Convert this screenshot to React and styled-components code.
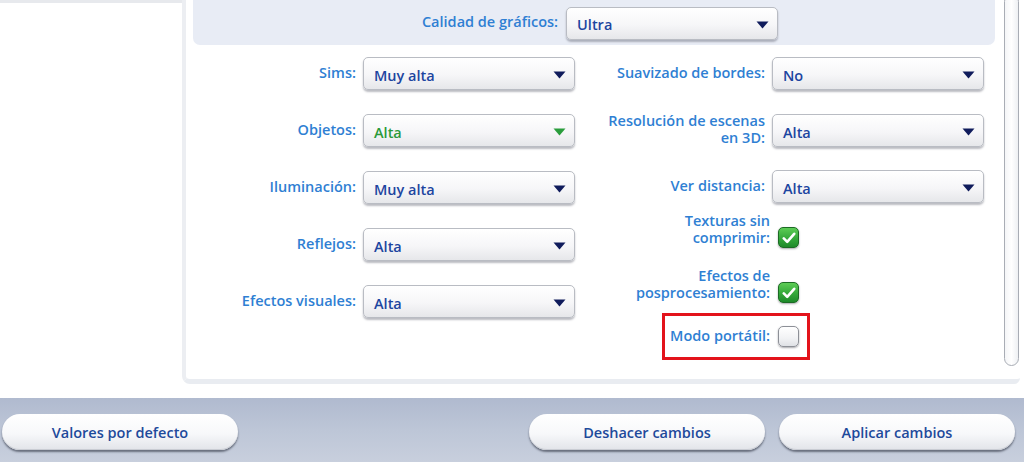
import styled, { createGlobalStyle } from 'styled-components'

const GlobalStyle = createGlobalStyle`
  html, body {
    margin: 0;
    padding: 0;
    background: #ffffff;
    font-family: "Open Sans", "DejaVu Sans", sans-serif;
    overflow: hidden;
  }
`

const leftRows = [
  { label: 'Sims:', value: 'Muy alta' },
  { label: 'Objetos:', value: 'Alta', green: true },
  { label: 'Iluminación:', value: 'Muy alta' },
  { label: 'Reflejos:', value: 'Alta' },
  { label: 'Efectos visuales:', value: 'Alta' },
]

function Arrow({ green }) {
  return (
    <svg width="13" height="8" viewBox="0 0 13 8">
      <path d="M0.5 0.5 H12.5 L6.5 7.5 Z" fill={green ? '#2a9d3c' : '#101c5c'} />
    </svg>
  )
}

function Check() {
  return (
    <svg width="14" height="12" viewBox="0 0 14 12">
      <path
        d="M1.8 6.4 L5.2 9.8 L12.2 1.8"
        fill="none"
        stroke="#ffffff"
        strokeWidth="2.6"
        strokeLinecap="round"
        strokeLinejoin="round"
      />
    </svg>
  )
}

function Dropdown({ value, green }) {
  return (
    <Select>
      <SelectValue $green={green}>{value}</SelectValue>
      <Arrow green={green} />
    </Select>
  )
}

export default function App() {
  return (
    <>
      <GlobalStyle />
      <Screen>
        <Upper>
          <Sidebar />
          <Panel>
            <Content>
              <QualityBar>
                <Label>Calidad de gráficos:</Label>
                <Dropdown value="Ultra" />
              </QualityBar>
              <Columns>
                <Column>
                  {leftRows.map((row, i) => (
                    <Row key={row.label} $top={i === 0 ? 12 : 24}>
                      <Label $width={163}>{row.label}</Label>
                      <Dropdown value={row.value} green={row.green} />
                    </Row>
                  ))}
                </Column>
                <Column>
                  <Row $top={12}>
                    <Label $width={183}>Suavizado de bordes:</Label>
                    <Dropdown value="No" />
                  </Row>
                  <Row $top={22}>
                    <Label $width={183}>
                      Resolución de escenas
                      <br />
                      en 3D:
                    </Label>
                    <Dropdown value="Alta" />
                  </Row>
                  <Row $top={21}>
                    <Label $width={183}>Ver distancia:</Label>
                    <Dropdown value="Alta" />
                  </Row>
                  <Row $top={9} $bottom>
                    <Label $width={188}>
                      Texturas sin
                      <br />
                      comprimir:
                    </Label>
                    <Box $checked>
                      <Check />
                    </Box>
                  </Row>
                  <Row $top={18} $bottom>
                    <Label $width={188}>
                      Efectos de
                      <br />
                      posprocesamiento:
                    </Label>
                    <Box $checked>
                      <Check />
                    </Box>
                  </Row>
                  <Row $top={22}>
                    <Label $width={188}>Modo portátil:</Label>
                    <Box />
                    <Highlight />
                  </Row>
                </Column>
              </Columns>
            </Content>
            <Scrollbar />
          </Panel>
        </Upper>
        <Footer>
          <PillButton>Valores por defecto</PillButton>
          <ButtonGroup>
            <PillButton>Deshacer cambios</PillButton>
            <PillButton>Aplicar cambios</PillButton>
          </ButtonGroup>
        </Footer>
      </Screen>
    </>
  )
}

const Screen = styled.div`
  width: 1024px;
  height: 462px;
  display: flex;
  flex-direction: column;
  background: #ffffff;
`

const Upper = styled.div`
  display: flex;
  height: 398px;
  flex-shrink: 0;
`

const Sidebar = styled.div`
  width: 182px;
  height: 382px;
  border-top: 3px solid #e7e9ed;
  box-sizing: border-box;
  background: #ffffff;
`

const Panel = styled.div`
  width: 838px;
  height: 384px;
  display: flex;
  box-sizing: border-box;
  border-left: 4px solid #eceef2;
  border-bottom: 5px solid #e9ecf1;
  border-bottom-left-radius: 8px;
  border-bottom-right-radius: 6px;
  background: #ffffff;
`

const Content = styled.div`
  width: 802px;
  margin-left: 7px;
  display: flex;
  flex-direction: column;
`

const QualityBar = styled.div`
  height: 45px;
  display: flex;
  align-items: center;
  justify-content: center;
  gap: 8px;
  padding-left: 12px;
  padding-top: 1px;
  box-sizing: border-box;
  background: #e8ecf5;
  border-bottom-left-radius: 7px;
  border-bottom-right-radius: 7px;
`

const Columns = styled.div`
  display: flex;
  gap: 7px;
`

const Column = styled.div`
  display: flex;
  flex-direction: column;
`

const Row = styled.div`
  position: relative;
  display: flex;
  align-items: ${({ $bottom }) => ($bottom ? 'flex-end' : 'center')};
  gap: 7px;
  margin-top: ${({ $top }) => $top}px;
`

const Label = styled.div`
  width: ${({ $width }) => ($width ? `${$width}px` : 'auto')};
  flex-shrink: 0;
  text-align: right;
  font-size: 14.5px;
  font-weight: 600;
  line-height: 17px;
  color: #2f7fd3;
  padding-bottom: 3px;
`

const Select = styled.div`
  width: 212px;
  height: 33px;
  box-sizing: border-box;
  display: flex;
  align-items: center;
  justify-content: space-between;
  padding: 3px 8px 0 10px;
  border: 1px solid #b9bcc3;
  border-radius: 5px;
  background: linear-gradient(#ffffff 0%, #f6f6f8 55%, #e6e7ea 100%);
  box-shadow: 0 2px 2px rgba(60, 64, 80, 0.35);
`

const SelectValue = styled.span`
  font-size: 14.5px;
  font-weight: 600;
  color: ${({ $green }) => ($green ? '#2a9a3a' : '#1d45a0')};
`

const Box = styled.div`
  width: 21px;
  height: 21px;
  box-sizing: border-box;
  margin-left: 1px;
  margin-bottom: 1px;
  display: flex;
  align-items: center;
  justify-content: center;
  border-radius: 5px;
  border: 1px solid ${({ $checked }) => ($checked ? '#1c6b24' : '#8d9097')};
  background: ${({ $checked }) =>
    $checked
      ? 'linear-gradient(#5ccc55 0%, #34a83a 55%, #1e8a2a 100%)'
      : 'linear-gradient(#ffffff 0%, #f1f2f4 60%, #dfe1e5 100%)'};
  box-shadow: 0 1px 2px rgba(40, 40, 50, 0.4);
`

const Highlight = styled.div`
  position: absolute;
  left: 80px;
  top: -13px;
  width: 148px;
  height: 47px;
  box-sizing: border-box;
  border: 3px solid #e3131b;
  pointer-events: none;
`

const Scrollbar = styled.div`
  width: 15px;
  height: 372px;
  margin-left: 9px;
  margin-top: -6px;
  box-sizing: border-box;
  border: 1.5px solid #a9adb5;
  border-radius: 8px;
  background: linear-gradient(90deg, #f4f5f7, #ffffff 50%, #eef0f3);
`

const Footer = styled.div`
  flex: 1;
  display: flex;
  align-items: center;
  justify-content: space-between;
  padding: 4px 9px 0 2px;
  background: linear-gradient(#b0bacf 0%, #bdc6d7 50%, #c8cfdd 100%);
`

const ButtonGroup = styled.div`
  display: flex;
  gap: 14px;
`

const PillButton = styled.button`
  width: 236px;
  height: 36px;
  border: none;
  border-radius: 18px;
  background: linear-gradient(#ffffff 0%, #f7f8fa 55%, #e2e4e9 100%);
  box-shadow: 0 2px 2px rgba(30, 35, 50, 0.55), inset 0 -1px 0 #c9ccd3;
  font-family: "Open Sans", "DejaVu Sans", sans-serif;
  font-size: 14.5px;
  font-weight: 600;
  color: #1e4a9b;
  cursor: pointer;
`
